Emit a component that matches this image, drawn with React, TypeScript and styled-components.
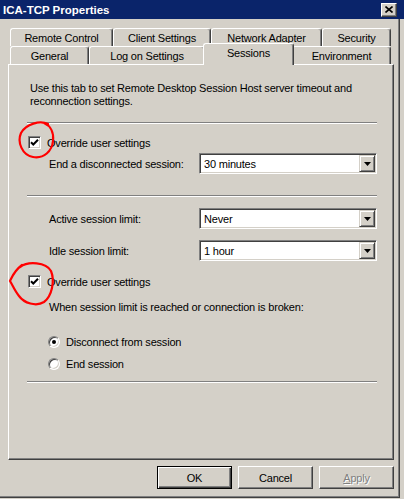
import styled, { createGlobalStyle } from "styled-components";

const GlobalStyle = createGlobalStyle`
  html, body {
    margin: 0;
    padding: 0;
    background: #d4d0c8;
  }
  body {
    font-family: "Liberation Sans", Arial, sans-serif;
    font-size: 11px;
    letter-spacing: -0.2px;
    color: #000;
  }
`;

const Window = styled.div`
  width: 404px;
  height: 499px;
  background: #d4d0c8;
  display: flex;
  flex-direction: column;
  overflow: hidden;
`;

const TitleBar = styled.div`
  height: 19px;
  flex: none;
  background: #0a246a;
  display: flex;
  align-items: center;
  justify-content: space-between;
  padding: 0 7px 0 3px;
`;

const TitleText = styled.span`
  color: #fff;
  font-weight: bold;
  font-size: 11.5px;
  letter-spacing: 0;
`;

const CloseBtn = styled.div`
  width: 16px;
  height: 14px;
  box-sizing: border-box;
  background: #d4d0c8;
  border: 1px solid;
  border-color: #fff #404040 #404040 #fff;
  box-shadow: inset -1px -1px 0 #808080;
  display: flex;
  align-items: center;
  justify-content: center;
`;

const Body = styled.div`
  flex: 1;
  display: flex;
  flex-direction: column;
  padding: 9px 10px 0 8px;
  box-shadow: inset -4px -1px 0 #d4d0c8, inset -5px -2px 0 #404040,
    inset -6px -3px 0 #808080;
`;

const TabRow = styled.div`
  display: flex;
  align-items: flex-start;
  height: 18px;
  margin-left: 2px;
`;

const Tab = styled.div<{ $w: number; $active?: boolean }>`
  width: ${(p) => p.$w + (p.$active ? 4 : 0)}px;
  height: ${(p) => (p.$active ? 22 : 18)}px;
  box-sizing: border-box;
  flex: none;
  background: #d4d0c8;
  border: 1px solid;
  border-bottom: none;
  border-color: #fff #404040 #404040 #fff;
  border-radius: 3px 3px 0 0;
  box-shadow: inset -1px 0 0 #808080;
  display: flex;
  align-items: center;
  justify-content: center;
  ${(p) =>
    p.$active &&
    `
    margin: -3px -2px -1px;
    padding-bottom: 3px;
    position: relative;
    z-index: 1;
  `}
`;

const Panel = styled.div`
  width: 386px;
  height: 396px;
  box-sizing: border-box;
  border: 1px solid;
  border-color: #fff #404040 #404040 #fff;
  box-shadow: inset -1px -1px 0 #808080;
  padding: 17px 16px 0 18px;
  display: flex;
  flex-direction: column;
`;

const Intro = styled.p`
  margin: 0 0 0 3px;
  line-height: 13px;
`;

const Separator = styled.div<{ $gap: number }>`
  margin-top: ${(p) => p.$gap}px;
  height: 0;
  border-top: 1px solid #808080;
  border-bottom: 1px solid #fff;
`;

const CheckRow = styled.div<{ $gap: number }>`
  position: relative;
  margin-top: ${(p) => p.$gap}px;
  height: 13px;
  display: flex;
  align-items: center;
  gap: 6px;
  padding-left: 1px;
`;

const CheckBox = styled.div`
  width: 13px;
  height: 13px;
  box-sizing: border-box;
  background: #fff;
  border: 1px solid;
  border-color: #808080 #fff #fff #808080;
  box-shadow: inset 1px 1px 0 #404040, inset -1px -1px 0 #d4d0c8;
  display: flex;
  align-items: center;
  justify-content: center;
`;

const Annotation = styled.svg<{ $left: number; $top: number }>`
  position: absolute;
  left: ${(p) => p.$left}px;
  top: ${(p) => p.$top}px;
  overflow: visible;
  pointer-events: none;
`;

const FieldRow = styled.div<{ $gap: number }>`
  margin-top: ${(p) => p.$gap}px;
  padding-left: 22px;
  display: flex;
  align-items: center;
`;

const FieldLabel = styled.span`
  width: 150px;
  flex: none;
`;

const Combo = styled.div`
  flex: 1;
  height: 21px;
  box-sizing: border-box;
  background: #fff;
  border: 1px solid;
  border-color: #808080 #fff #fff #808080;
  box-shadow: inset 1px 1px 0 #404040, inset -1px -1px 0 #d4d0c8;
  display: flex;
  align-items: center;
  padding: 1px 1px 1px 4px;
`;

const ComboText = styled.span`
  flex: 1;
`;

const ComboButton = styled.div`
  width: 16px;
  height: 17px;
  box-sizing: border-box;
  background: #d4d0c8;
  border: 1px solid;
  border-color: #d4d0c8 #404040 #404040 #d4d0c8;
  box-shadow: inset 1px 1px 0 #fff, inset -1px -1px 0 #808080;
  display: flex;
  align-items: center;
  justify-content: center;
`;

const Note = styled.p<{ $gap: number }>`
  margin: ${(p) => p.$gap}px 0 0 22px;
  line-height: 13px;
`;

const RadioRow = styled.div<{ $gap: number }>`
  margin-top: ${(p) => p.$gap}px;
  padding-left: 21px;
  height: 13px;
  display: flex;
  align-items: center;
  gap: 6px;
`;

const Radio = styled.div`
  width: 12px;
  height: 12px;
  box-sizing: border-box;
  border-radius: 50%;
  background: #fff;
  border: 1px solid;
  border-color: #808080 #fff #fff #808080;
  box-shadow: inset 1px 1px 0 #404040, inset -1px -1px 0 #d4d0c8;
  display: flex;
  align-items: center;
  justify-content: center;
`;

const RadioDot = styled.div`
  width: 4px;
  height: 4px;
  border-radius: 50%;
  background: #000;
`;

const ButtonRow = styled.div`
  margin-top: 6px;
  display: flex;
  justify-content: flex-end;
  gap: 6px;
`;

const Button = styled.div<{ $default?: boolean; $disabled?: boolean }>`
  width: 75px;
  height: 23px;
  box-sizing: border-box;
  background: #d4d0c8;
  display: flex;
  align-items: center;
  justify-content: center;
  color: ${(p) => (p.$disabled ? "#808080" : "#000")};
  text-shadow: ${(p) => (p.$disabled ? "1px 1px 0 #fff" : "none")};
  border: 1px solid;
  border-color: ${(p) =>
    p.$default ? "#000" : "#fff #404040 #404040 #fff"};
  box-shadow: ${(p) =>
    p.$default
      ? "inset 1px 1px 0 #fff, inset -1px -1px 0 #404040, inset -2px -2px 0 #808080"
      : "inset -1px -1px 0 #808080"};
`;

const Arrow = () => (
  <svg width="7" height="4" viewBox="0 0 7 4">
    <path d="M0 0h7L3.5 4z" fill="#000" />
  </svg>
);

const Check = () => (
  <svg width="9" height="9" viewBox="0 0 9 9">
    <path d="M1 4.2l2.3 2.3L8 1.8" stroke="#000" strokeWidth="2" fill="none" />
  </svg>
);

function Field({ label, value, gap }: { label: string; value: string; gap: number }) {
  return (
    <FieldRow $gap={gap}>
      <FieldLabel>{label}</FieldLabel>
      <Combo>
        <ComboText>{value}</ComboText>
        <ComboButton>
          <Arrow />
        </ComboButton>
      </Combo>
    </FieldRow>
  );
}

export default function App() {
  return (
    <>
      <GlobalStyle />
      <Window>
        <TitleBar>
          <TitleText>ICA-TCP Properties</TitleText>
          <CloseBtn>
            <svg width="8" height="7" viewBox="0 0 8 7">
              <path d="M0.5 0.5l7 6M7.5 0.5l-7 6" stroke="#000" strokeWidth="1.6" />
            </svg>
          </CloseBtn>
        </TitleBar>
        <Body>
          <TabRow>
            <Tab $w={103}>Remote Control</Tab>
            <Tab $w={98}>Client Settings</Tab>
            <Tab $w={111}>Network Adapter</Tab>
            <Tab $w={69}>Security</Tab>
          </TabRow>
          <TabRow>
            <Tab $w={79}>General</Tab>
            <Tab $w={116}>Log on Settings</Tab>
            <Tab $w={87} $active>
              Sessions
            </Tab>
            <Tab $w={99}>Environment</Tab>
          </TabRow>
          <Panel>
            <Intro>
              Use this tab to set Remote Desktop Session Host server timeout and
              <br />
              reconnection settings.
            </Intro>
            <Separator $gap={14} />
            <CheckRow $gap={12}>
              <CheckBox>
                <Check />
              </CheckBox>
              Override user settings
              <Annotation $left={-9} $top={-15} width="38" height="38" viewBox="18 121 38 38">
                <path
                  d="M48 124C40 120 26 124 21 133C17 142 22 155 33 157C44 159 52 151 53 141C54 133 51 126 44 123"
                  stroke="#f00"
                  strokeWidth="2.2"
                  fill="none"
                  strokeLinecap="round"
                />
              </Annotation>
            </CheckRow>
            <Field gap={4} label="End a disconnected session:" value="30 minutes" />
            <Separator $gap={21} />
            <Field gap={11} label="Active session limit:" value="Never" />
            <Field gap={11} label="Idle session limit:" value="1 hour" />
            <CheckRow $gap={14}>
              <CheckBox>
                <Check />
              </CheckBox>
              Override user settings
              <Annotation $left={-19} $top={-14} width="46" height="46" viewBox="8 262 46 46">
                <path
                  d="M20 268C28 262 46 263 51 272C55 282 52 297 44 303C36 308 24 304 19 297C15 292 13 287 10 282C12 278 14 272 22 266"
                  stroke="#f00"
                  strokeWidth="2.2"
                  fill="none"
                  strokeLinecap="round"
                />
              </Annotation>
            </CheckRow>
            <Note $gap={13}>When session limit is reached or connection is broken:</Note>
            <RadioRow $gap={21}>
              <Radio>
                <RadioDot />
              </Radio>
              Disconnect from session
            </RadioRow>
            <RadioRow $gap={9}>
              <Radio />
              End session
            </RadioRow>
            <Separator $gap={11} />
          </Panel>
          <ButtonRow>
            <Button $default>OK</Button>
            <Button>Cancel</Button>
            <Button $disabled>
              <u>A</u>pply
            </Button>
          </ButtonRow>
        </Body>
      </Window>
    </>
  );
}
